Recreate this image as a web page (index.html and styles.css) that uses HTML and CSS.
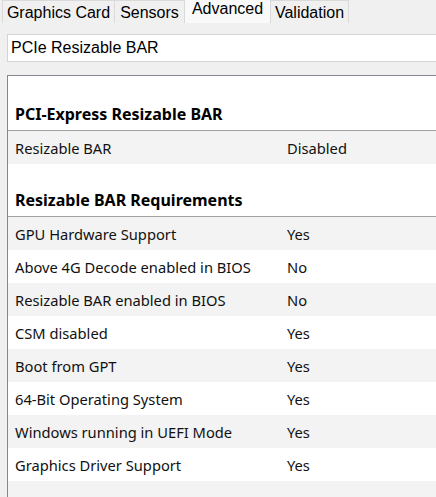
FILE: index.html
```html
<!DOCTYPE html>
<html lang="en">
<head>
<meta charset="utf-8">
<title>Advanced</title>
<link rel="stylesheet" href="styles.css">
</head>
<body>
  <nav class="tabs">
    <div class="tab tab-card">Graphics Card</div>
    <div class="tab tab-sensors">Sensors</div>
    <div class="tab tab-advanced active">Advanced</div>
    <div class="tab tab-validation">Validation</div>
  </nav>
  <main class="panel">
    <div class="combo">PCIe Resizable BAR</div>
    <div class="list">
      <section class="group">
        <h2 class="group-title">PCI-Express Resizable BAR</h2>
        <div class="row"><span>Resizable BAR</span><span>Disabled</span></div>
      </section>
      <section class="group">
        <h2 class="group-title">Resizable BAR Requirements</h2>
        <div class="row"><span>GPU Hardware Support</span><span>Yes</span></div>
        <div class="row"><span>Above 4G Decode enabled in BIOS</span><span>No</span></div>
        <div class="row"><span>Resizable BAR enabled in BIOS</span><span>No</span></div>
        <div class="row"><span>CSM disabled</span><span>Yes</span></div>
        <div class="row"><span>Boot from GPT</span><span>Yes</span></div>
        <div class="row"><span>64-Bit Operating System</span><span>Yes</span></div>
        <div class="row"><span>Windows running in UEFI Mode</span><span>Yes</span></div>
        <div class="row"><span>Graphics Driver Support</span><span>Yes</span></div>
        <div class="row"><span></span><span></span></div>
      </section>
    </div>
  </main>
</body>
</html>
```

FILE: styles.css
```css
html, body {
  margin: 0;
  padding: 0;
  height: 100%;
  overflow: hidden;
  background: #f0f0f0;
}

body {
  font-family: "Liberation Sans", Arial, sans-serif;
  color: #000;
}

/* tab strip */
.tabs {
  display: flex;
  height: 23px;
  padding-left: 2px;
  align-items: flex-end;
}

.tab {
  box-sizing: border-box;
  height: 23px;
  padding-top: 2px;
  font-size: 16px;
  line-height: 19px;
  text-align: center;
  white-space: nowrap;
  background: #f0f0f0;
  border: 1px solid #dadada;
  border-bottom: none;
  margin-right: -1px;
}

.tab-card { width: 113px; }
.tab-sensors { width: 71px; }
.tab-advanced { width: 87px; }
.tab-validation { width: 79px; }

.active {
  position: relative;
  z-index: 1;
  height: 25px;
  margin-top: -2px;
  padding-top: 0;
  background: #f9f9f9;
  border-color: #d9d9d9;
}

/* page body */
.panel {
  padding: 11px 0 0 7px;
}

.combo {
  box-sizing: border-box;
  width: 460px;
  height: 28px;
  padding: 3px 0 0 3px;
  font-size: 16px;
  line-height: 20px;
  background: #fff;
  border: 1px solid #d4d4d4;
}

.list {
  box-sizing: border-box;
  width: 460px;
  height: 460px;
  margin-top: 13px;
  padding-top: 2px;
  background: #fff;
  border: 1px solid #828790;
  font-family: "Noto Sans", "Open Sans", sans-serif;
  font-size: 14.7px;
}

.group-title {
  box-sizing: content-box;
  height: 27px;
  margin: 19px 0 0 0;
  padding: 6px 0 0 7px;
  font-size: 16px;
  font-weight: bold;
  line-height: 22px;
  color: #000;
  border-bottom: 1px solid #a0a0a0;
}

.row {
  box-sizing: border-box;
  display: grid;
  grid-template-columns: 272px 1fr;
  height: 33px;
  align-items: center;
  padding: 1px 0 0 7px;
  line-height: 20px;
  color: #111;
}

.row:nth-of-type(odd) {
  background: #f3f3f3;
}
```
